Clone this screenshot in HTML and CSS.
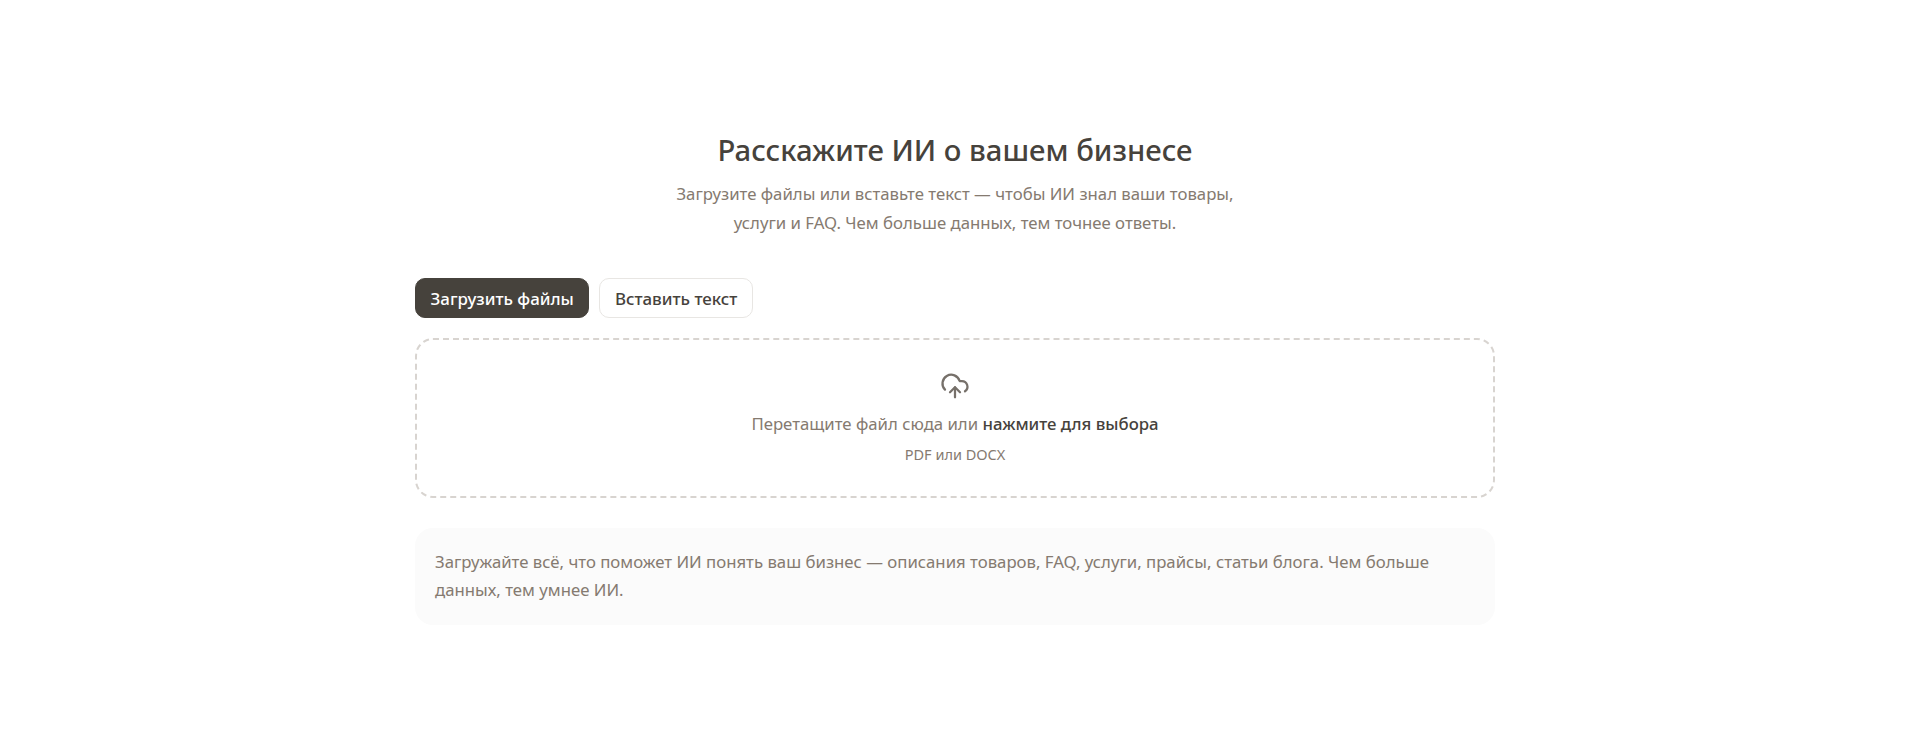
FILE: index.html
```html
<!DOCTYPE html>
<html lang="ru">

<head>
    <meta name="viewport" content="width=device-width, initial-scale=1">
    <link rel="stylesheet" href="styles.css">
    <title>Расскажите ИИ о вашем бизнесе</title>
</head>

<body>
    <div id="container">
        <div class="intro">
            <h1>Расскажите ИИ о вашем бизнесе</h1>
            <p>Загрузите файлы или вставьте текст — чтобы ИИ знал ваши товары,<br>услуги и FAQ. Чем больше данных, тем точнее ответы.</p>
        </div>

        <div class="tabs">
            <button class="tab tab-active">Загрузить файлы</button>
            <button class="tab">Вставить текст</button>
        </div>

        <div class="dropzone">
            <svg class="upload-icon" viewBox="0 0 24 24" fill="none" stroke="currentColor" stroke-width="1.8" stroke-linecap="round" stroke-linejoin="round">
                <path d="M12 13v8"/>
                <path d="M4 14.9A7 7 0 1 1 15.7 8h1.8a4.5 4.5 0 0 1 2.5 8.2"/>
                <path d="m8 17 4-4 4 4"/>
            </svg>
            <div class="drop-text">Перетащите файл сюда или <b>нажмите для выбора</b></div>
            <div class="drop-hint">PDF или DOCX</div>
        </div>

        <div class="info">Загружайте всё, что поможет ИИ понять ваш бизнес — описания товаров, FAQ, услуги, прайсы, статьи блога. Чем больше данных, тем умнее ИИ.</div>
    </div>
</body>

</html>
```
FILE: styles.css
```css
body {
    margin: 0;
    background-color: #ffffff;
    font-family: "Noto Sans", sans-serif;
    color: #46423c;
}

#container {
    width: 1080px;
    margin: 0 auto;
    padding-top: 131px;
}

.intro {
    text-align: center;
    margin-bottom: 41px;
}

h1 {
    margin: 0 0 9px;
    font-size: 29.25px;
    line-height: 39px;
    font-weight: 550;
    color: #46423c;
}

.intro p {
    margin: 0;
    font-size: 16.75px;
    line-height: 29px;
    color: #857a70;
}

.tabs {
    display: flex;
    gap: 10px;
    margin-bottom: 20px;
}

.tab {
    height: 40px;
    padding: 0 14.5px;
    border: 1px solid #e8e6e3;
    border-radius: 10px;
    background-color: #ffffff;
    color: #46423c;
    font-family: inherit;
    font-size: 16.9px;
    font-weight: 500;
    cursor: pointer;
}

.tab-active {
    border-color: #46423c;
    background-color: #46423c;
    color: #ffffff;
}

.dropzone {
    display: flex;
    flex-direction: column;
    align-items: center;
    height: 160px;
    box-sizing: border-box;
    padding-top: 31px;
    border: 2px dashed #d8d4d0;
    border-radius: 18px;
    margin-bottom: 30px;
}

.upload-icon {
    width: 30px;
    height: 30px;
    color: #76706a;
}

.drop-text {
    margin-top: 11px;
    font-size: 16.75px;
    line-height: 24px;
    color: #857a70;
}

.drop-text b {
    font-weight: 500;
    color: #46423c;
}

.drop-hint {
    margin-top: 8px;
    font-size: 14.5px;
    line-height: 20px;
    color: #857a70;
}

.info {
    padding: 20px 20px 21px;
    border-radius: 18px;
    background-color: #fbfbfb;
    font-size: 16.75px;
    line-height: 28px;
    color: #857a70;
}
```
